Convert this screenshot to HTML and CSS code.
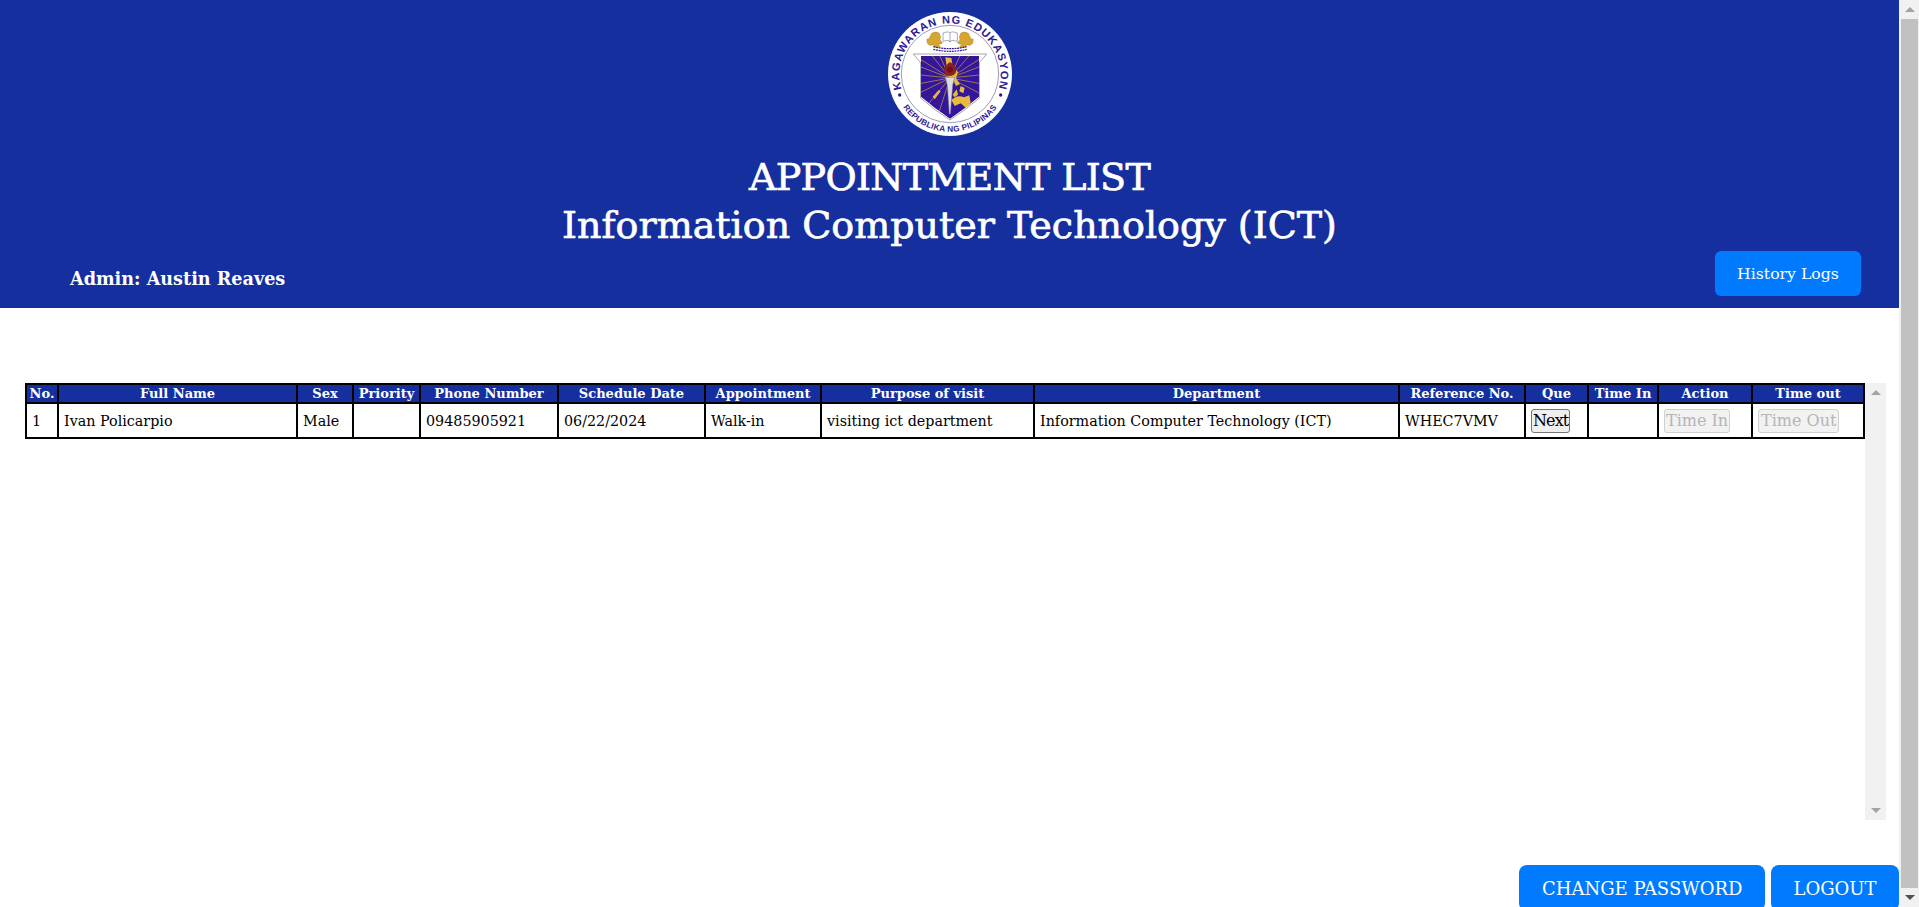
FILE: index.html
```html
<!DOCTYPE html>
<html lang="en">
<head>
<meta charset="utf-8">
<title>Appointment List</title>
<link rel="stylesheet" href="styles.css">
</head>
<body>
<div class="page">
  <header class="banner">
    <svg class="seal" viewBox="112 34 372 372" role="img" aria-label="Kagawaran ng Edukasyon seal">
      <defs>
        <path id="arcTop" d="M 160 284 A 152 152 0 1 1 436 284"/>
        <path id="arcBottom" d="M 136 279 A 172 172 0 0 0 460 279"/>
        <clipPath id="shieldClip"><path d="M211 166H385V288Q345 322 298 354Q251 322 211 288Z"/></clipPath>
      </defs>
      <circle cx="298" cy="220" r="186" fill="#fff"/>
      <circle cx="298" cy="220" r="146" fill="none" stroke="#6d6a8c" stroke-width="2"/>
      <text class="seal-top"><textPath href="#arcTop" startOffset="50%" text-anchor="middle">KAGAWARAN NG EDUKASYON</textPath></text>
      <text class="seal-bottom"><textPath href="#arcBottom" startOffset="50%" text-anchor="middle">REPUBLIKA NG PILIPINAS</textPath></text>
      <circle cx="147" cy="283" r="5" fill="#2c1a94"/>
      <circle cx="450" cy="283" r="5" fill="#2c1a94"/>
      <path d="M188 160H408L386 186V292Q345 328 298 358Q251 328 210 292V186Z" fill="#fff" stroke="#77758c" stroke-width="2"/>
      <path d="M211 166H385V288Q345 322 298 354Q251 322 211 288Z" fill="#34169a"/>
      <g clip-path="url(#shieldClip)" stroke="#c9a53e" stroke-width="2">
        <path d="M298 232L200 170M298 232L200 195M298 232L200 222M298 232L200 250M298 232L200 280M298 232L225 320M298 232L260 350M298 232L240 160M298 232L265 160M298 232L330 160M298 232L360 160M298 232L395 170M298 232L395 195M298 232L395 222M298 232L395 250M298 232L395 282" fill="none"/>
      </g>
      <path d="M284 170L302 172L306 196L322 214L316 232L328 250L316 256L306 234L292 226Z" fill="#e6bb3d"/>
      <path d="M330 256L342 262L338 278L326 272ZM306 282L318 266L322 282L312 290Z" fill="#e6bb3d"/>
      <path d="M302 298Q320 280 340 290L356 284L360 306L346 322L330 308L312 316Z" fill="#e6bb3d"/>
      <path d="M246 288L264 268L270 272L252 296Z" fill="#e6bb3d"/>
      <path d="M284 230H312L306 254L299 340L296 340L290 254Z" fill="#dcdbe2" stroke="#77758c" stroke-width="1.5"/>
      <path d="M298 184Q316 194 317 210Q314 224 298 226Q281 224 280 210Q282 194 298 184Z" fill="#8f1f24"/>
      <circle cx="298" cy="207" r="9" fill="#6a1419"/>
      <path d="M277 97Q297 90 298 98Q300 90 320 97V122Q300 116 298 124Q296 116 277 122Z" fill="#fff" stroke="#55527a" stroke-width="1.5"/>
      <path d="M298 98V124" stroke="#55527a" stroke-width="1.5"/>
      <path d="M243 98Q256 90 266 98Q272 108 268 118L276 126Q270 132 262 130L270 140H252L248 132Q236 138 230 128L228 116Q236 116 238 108Z" fill="#d8a52e" stroke="#8b6a18"/>
      <path d="M353 98Q340 90 330 98Q324 108 328 118L320 126Q326 132 334 130L326 140H344L348 132Q360 138 366 128L368 116Q360 116 358 108Z" fill="#d8a52e" stroke="#8b6a18"/>
      <path d="M248 138Q298 150 348 138M248 146Q298 158 348 146" fill="none" stroke="#34169a" stroke-width="3.5" stroke-dasharray="6 2"/>
    </svg>
    <h1 class="title"><span class="title-first">APPOINTMENT LIST</span><br>Information Computer Technology (ICT)</h1>
    <div class="banner-row">
      <span class="admin">Admin: Austin Reaves</span>
      <a class="btn btn-history">History Logs</a>
    </div>
  </header>

  <main class="list-area">
    <div class="table-scroll">
      <table class="appts">
        <thead>
          <tr>
            <th class="c-no">No.</th><th class="c-name">Full Name</th><th class="c-sex">Sex</th><th class="c-pri">Priority</th>
            <th class="c-phone">Phone Number</th><th class="c-date">Schedule Date</th><th class="c-appt">Appointment</th>
            <th class="c-purpose">Purpose of visit</th><th class="c-dept">Department</th><th class="c-ref">Reference No.</th>
            <th class="c-que">Que</th><th class="c-in">Time In</th><th class="c-action">Action</th><th class="c-out">Time out</th>
          </tr>
        </thead>
        <tbody>
          <tr>
            <td>1</td><td>Ivan Policarpio</td><td>Male</td><td></td><td>09485905921</td><td>06/22/2024</td><td>Walk-in</td>
            <td>visiting ict department</td><td>Information Computer Technology (ICT)</td><td>WHEC7VMV</td>
            <td><button class="cell-btn cell-next" type="button">Next</button></td><td></td>
            <td><button class="cell-btn cell-in" type="button" disabled>Time In</button></td>
            <td><button class="cell-btn" type="button" disabled>Time Out</button></td>
          </tr>
        </tbody>
      </table>
      <div class="sbar sbar-inner" aria-hidden="true">
        <span class="arrow arrow-up"></span>
        <span class="arrow arrow-down"></span>
      </div>
    </div>
  </main>

  <footer class="actions">
    <a class="btn btn-foot">CHANGE PASSWORD</a>
    <a class="btn btn-foot">LOGOUT</a>
  </footer>
</div>
<div class="sbar sbar-page" aria-hidden="true">
  <span class="arrow arrow-up"></span>
  <span class="thumb"></span>
  <span class="arrow arrow-down arrow-dark"></span>
</div>
</body>
</html>
```

FILE: styles.css
```css
* { box-sizing: border-box; }
html, body { margin: 0; height: 907px; overflow: hidden; }
body {
  display: flex;
  font-family: "DejaVu Serif", "Liberation Serif", serif;
  background: #fff;
  color: #000;
}
.page { flex: 1; min-width: 0; height: 907px; overflow: hidden; display: flex; flex-direction: column; }

.banner {
  height: 308px;
  flex: none;
  background: #152f9f;
  color: #fff;
  padding-top: 12px;
  display: flex;
  flex-direction: column;
  align-items: center;
}
.seal { width: 124px; height: 124px; display: block; flex: none; }
.seal-top { font: bold 33px "Liberation Sans", sans-serif; fill: #2c1a94; letter-spacing: 3.2px; }
.seal-bottom { font: bold 24.5px "Liberation Sans", sans-serif; fill: #2c1a94; letter-spacing: 0.8px; }
.title {
  margin: 17px 0 0;
  font-size: 38px;
  line-height: 48px;
  font-weight: 400;
  text-align: center;
  width: 100%;
  -webkit-text-stroke: 0.7px #fff;
}
.title-first { letter-spacing: -0.7px; }
.banner-row {
  width: 100%;
  display: flex;
  justify-content: space-between;
  align-items: center;
  padding: 0 38px 0 70px;
  margin-top: 2px;
}
.admin { font-size: 17.6px; font-weight: 700; padding-top: 9px; }

.btn {
  background: #007bff;
  color: #fff;
  display: flex;
  align-items: center;
  justify-content: center;
  border-radius: 6px;
}
.btn-history { width: 146px; height: 45px; font-size: 15.7px; }

.list-area { flex: none; padding: 75px 13px 0 25px; }
.table-scroll { display: flex; align-items: flex-start; height: 437px; }
.appts {
  width: 1839px;
  flex: none;
  table-layout: fixed;
  border-collapse: collapse;
  border: 2px solid #000;
  font-size: 14.3px;
}
.appts th, .appts td { border: 2px solid #000; }
.appts th {
  background: #152f9f;
  color: #fff;
  height: 19px;
  padding: 0;
  font-size: 13px;
  line-height: 15px;
  font-weight: 700;
  text-align: center;
  white-space: nowrap;
}
.appts td { height: 35px; padding: 0 5px; white-space: nowrap; line-height: 18px; }

.c-no { width: 32px; }
.c-name { width: 239px; }
.c-sex { width: 56px; }
.c-pri { width: 67px; }
.c-phone { width: 138px; }
.c-date { width: 147px; }
.c-appt { width: 116px; }
.c-purpose { width: 213px; }
.c-dept { width: 365px; }
.c-ref { width: 126px; }
.c-que { width: 63px; }
.c-in { width: 70px; }
.c-action { width: 94px; }
.c-out { width: 112px; }

.cell-btn {
  font: 400 16px "DejaVu Serif", serif;
  height: 24px;
  padding: 0 2px;
  color: #000;
  background: #efefef;
  border: 1px solid #767676;
  border-radius: 3px;
  white-space: nowrap;
  display: block;
}
.cell-next { letter-spacing: -0.9px; padding: 0 1px; }
.cell-in { padding: 0 1px; }
.cell-btn:disabled {
  color: #b5b5b5;
  background: #f2f2f2;
  border-color: #d0d0d0;
}

.sbar { background: #f1f1f1; display: flex; flex-direction: column; align-items: center; justify-content: space-between; flex: none; }
.sbar-inner { width: 21px; height: 437px; }
.sbar-page { width: 20px; height: 907px; padding-left: 2px; padding-right: 1px; }
.thumb { flex: 1; width: 17px; background: #c1c1c1; }
.arrow { flex: none; width: 17px; height: 19px; display: flex; align-items: center; justify-content: center; }
.arrow::before { content: ""; border-left: 5px solid transparent; border-right: 5px solid transparent; }
.arrow-up::before { border-bottom: 5px solid #a3a3a3; }
.arrow-down::before { border-top: 5px solid #a3a3a3; }
.arrow-dark::before { border-top-color: #505050; }

.actions { display: flex; justify-content: flex-end; gap: 6px; margin-top: 45px; flex: none; }
.btn-foot { height: 46px; font-size: 18px; border-radius: 8px; padding: 0 22.5px; }
```
